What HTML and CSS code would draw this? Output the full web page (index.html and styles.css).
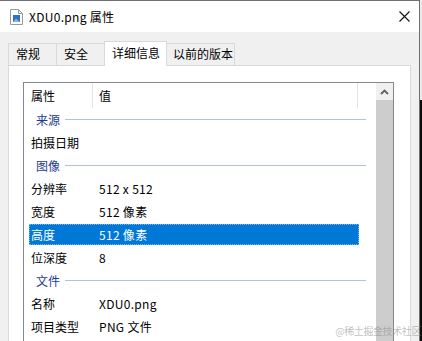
FILE: index.html
```html
<!DOCTYPE html>
<html>
<head>
    <meta charset="UTF-8">
    <title>XDU0.png 属性</title>
    <link rel="stylesheet" href="styles.css">
</head>
<body>
    <div class="window">
        <div class="titlebar">
            <svg class="file-icon" width="13" height="16" viewBox="0 0 13 16">
                <path d="M0.5 0.5 H8.5 L12.5 4.5 V15.5 H0.5 Z" fill="#fff" stroke="#9a9a9a"/>
                <path d="M8.5 0.5 V4.5 H12.5" fill="none" stroke="#9a9a9a"/>
                <rect x="3" y="6" width="7" height="7" fill="#2f6fcf"/>
                <path d="M3 13 L6 9.5 L10 13 Z" fill="#7fb2ee"/>
            </svg>
            <span class="title">XDU0.png 属性</span>
            <svg class="close" width="11" height="11" viewBox="0 0 11 11">
                <path d="M0.5 0.5 L10.5 10.5 M10.5 0.5 L0.5 10.5" stroke="#111" stroke-width="1.1"/>
            </svg>
        </div>

        <div class="dialog">
            <div class="tabs">
                <div class="tab w-general">常规</div>
                <div class="tab w-security">安全</div>
                <div class="tab active w-details">详细信息</div>
                <div class="tab w-versions">以前的版本</div>
            </div>

            <div class="panel">
                <div class="listbox">
                    <div class="list">
                        <div class="header">
                            <div class="hcell hname">属性</div>
                            <div class="hcell hvalue">值</div>
                        </div>

                        <div class="group">来源</div>
                        <div class="row"><div class="cells"><span class="name">拍摄日期</span><span class="value"></span></div></div>

                        <div class="group">图像</div>
                        <div class="row"><div class="cells"><span class="name">分辨率</span><span class="value">512 x 512</span></div></div>
                        <div class="row"><div class="cells"><span class="name">宽度</span><span class="value">512 像素</span></div></div>
                        <div class="row selected"><div class="cells"><span class="name">高度</span><span class="value">512 像素</span></div></div>
                        <div class="row"><div class="cells"><span class="name">位深度</span><span class="value">8</span></div></div>

                        <div class="group">文件</div>
                        <div class="row"><div class="cells"><span class="name">名称</span><span class="value">XDU0.png</span></div></div>
                        <div class="row"><div class="cells"><span class="name">项目类型</span><span class="value">PNG 文件</span></div></div>
                    </div>

                    <div class="scrollbar">
                        <div class="arrow">
                            <svg width="9" height="6" viewBox="0 0 9 6">
                                <path d="M1 5 L4.5 1.5 L8 5" fill="none" stroke="#606060" stroke-width="1.8"/>
                            </svg>
                        </div>
                        <div class="thumb"></div>
                    </div>
                </div>
            </div>
        </div>
    </div>

    <div class="watermark">@稀土掘金技术社区</div>
</body>
</html>
```

FILE: styles.css
```css
html, body {
    margin: 0;
    padding: 0;
}

body {
    width: 422px;
    height: 341px;
    overflow: hidden;
    position: relative;
    background: linear-gradient(#ebebeb 0, #ebebeb 100px, #0d0d0d 100px);
    font-family: "Noto Sans CJK SC", "Microsoft YaHei", sans-serif;
    font-size: 12px;
    color: #000;
}

.window {
    width: 420px;
    height: 341px;
    overflow: hidden;
    box-sizing: border-box;
    border-top: 1px solid #707070;
    border-right: 1px solid #707070;
    background: #f0f0f0;
    display: flex;
    flex-direction: column;
}

/* Title bar */
.titlebar {
    height: 31px;
    flex-shrink: 0;
    background: #fff;
    display: flex;
    align-items: center;
    padding-left: 10px;
}

.title {
    margin-left: 6px;
    line-height: 16px;
    letter-spacing: 0.3px;
}

.close {
    margin-left: auto;
    margin-right: 9px;
}

/* Dialog body */
.dialog {
    flex: 1;
    display: flex;
    flex-direction: column;
    padding: 9px 8px 0 8px;
    min-height: 0;
}

.tabs {
    display: flex;
    align-items: flex-end;
    height: 24px;
    flex-shrink: 0;
}

.tab {
    height: 22px;
    box-sizing: border-box;
    border: 1px solid #d9d9d9;
    border-bottom: none;
    padding-left: 7px;
    line-height: 20px;
    margin-left: -1px;
    white-space: nowrap;
}

.tab:first-child {
    margin-left: 0;
}

.tab.active {
    height: 25px;
    margin-bottom: -1px;
    background: #fff;
    position: relative;
    z-index: 1;
    line-height: 21px;
}

.w-general { width: 49px; }
.w-security { width: 49px; }
.w-details { width: 63px; }
.w-versions { width: 69px; padding-left: 6px; }

.panel {
    flex: 1;
    overflow: hidden;
    background: #fff;
    border: 1px solid #d9d9d9;
    border-bottom: none;
    padding: 16px 0 0 14px;
    min-height: 0;
}

/* Property list */
.listbox {
    width: 371px;
    height: 300px;
    box-sizing: border-box;
    border: 1px solid #828790;
    display: flex;
    background: #fff;
}

.list {
    flex: 1;
}

.header {
    display: flex;
    height: 25px;
}

.hcell {
    box-sizing: border-box;
    line-height: 25px;
    border-right: 1px solid #e5e5e5;
}

.hname {
    width: 69px;
    padding-left: 7px;
}

.hvalue {
    width: 265px;
    padding-left: 6px;
}

.group {
    height: 23px;
    display: flex;
    align-items: center;
    padding-left: 12px;
    margin-right: 10px;
    color: #1e3b94;
}

.group::after {
    content: "";
    flex: 1;
    height: 1px;
    margin-left: 5px;
    background: #b3c3df;
}

.row {
    height: 23px;
    box-sizing: border-box;
    padding: 1px 0 1px;
}

.cells {
    display: flex;
    width: 330px;
    height: 21px;
    margin-left: 5px;
    box-sizing: border-box;
    line-height: 21px;
}

.name {
    width: 70px;
    padding-left: 2px;
    box-sizing: border-box;
}

.value {
    letter-spacing: 0.3px;
}

.selected .cells {
    background: #0078d7;
    color: #fff;
    outline: 1px dotted #7fb6e8;
    outline-offset: -1px;
}

.scrollbar {
    width: 17px;
    display: flex;
    flex-direction: column;
    background: #f0f0f0;
}

.arrow {
    height: 17px;
    display: flex;
    align-items: center;
    justify-content: center;
}

.thumb {
    flex: 1;
    background: #cdcdcd;
}

.watermark {
    position: absolute;
    right: 1px;
    bottom: 3px;
    font-size: 10px;
    letter-spacing: -0.4px;
    color: rgba(140, 140, 140, 0.55);
}
```
